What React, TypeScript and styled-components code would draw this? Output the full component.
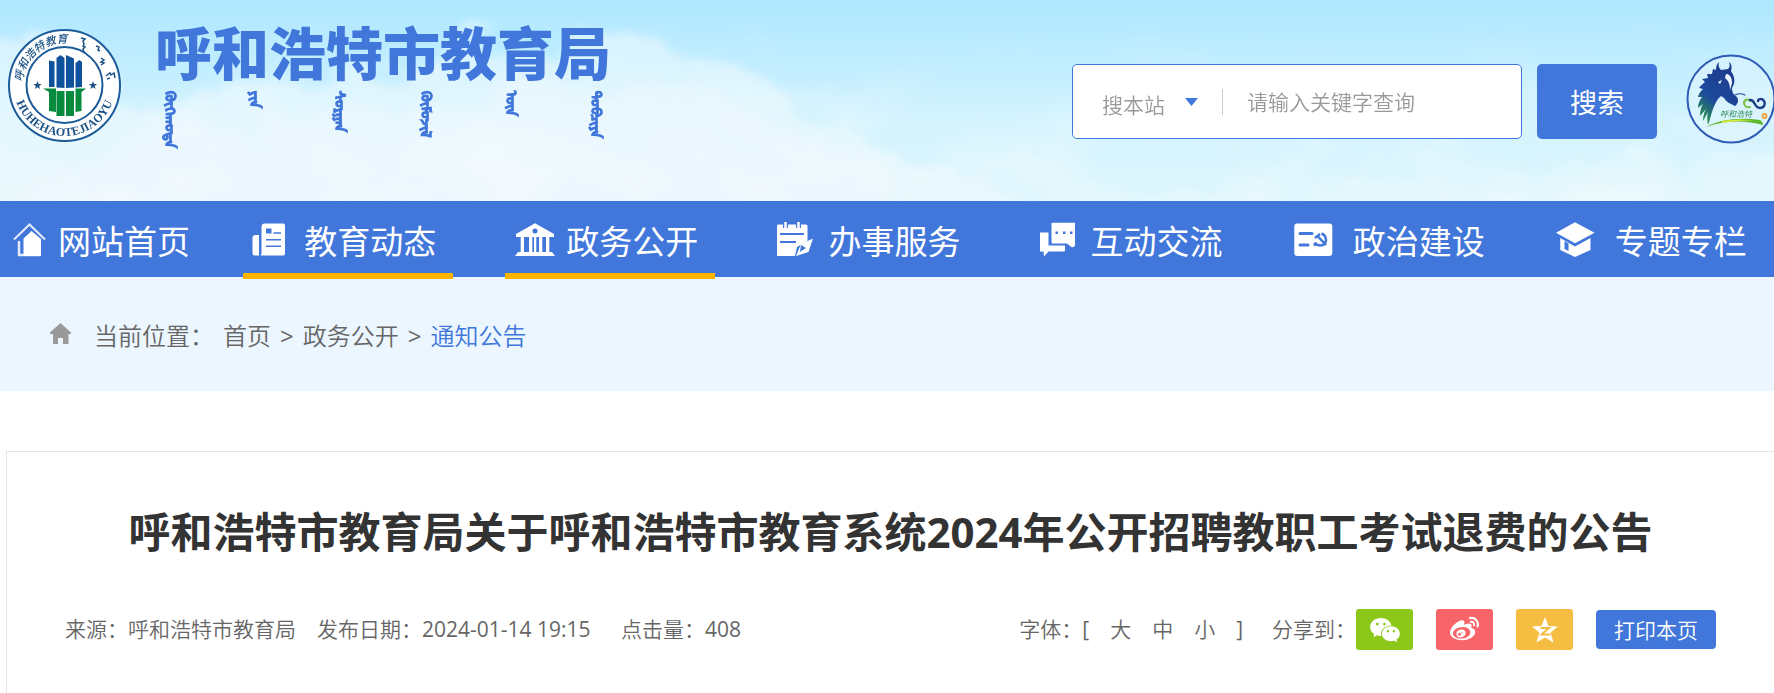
import React from "react";
import styled, { createGlobalStyle } from "styled-components";
import { FaWeibo } from "react-icons/fa";
import { AiFillWechat } from "react-icons/ai";

const blue = "#4177da";
const sans = `"Open Sans", "Noto Sans CJK SC", sans-serif`;

const GlobalStyle = createGlobalStyle`
  *, *::before, *::after { box-sizing: border-box; }
  body {
    margin: 0;
    background: #fff;
    color: #666;
    font-family: ${sans};
    font-weight: 350;
    overflow-x: hidden;
  }
  a { color: inherit; text-decoration: none; }
  button, input, select { font-family: inherit; font-weight: inherit; }
`;

const Latin = styled.span`
  font-weight: 400;
`;

/* ---------- header ---------- */

const Header = styled.header`
  position: relative;
  display: flex;
  align-items: flex-start;
  padding: 28px 0 57px 8px;
  background: linear-gradient(#ade7ff 0, #bfedff 60px, #d3f3fe 120px, #def6fd 201px);
  overflow: hidden;
`;

const Sky = styled.svg`
  position: absolute;
  inset: 0;
  width: 100%;
  height: 100%;
`;

const Brand = styled.a`
  position: relative;
  display: flex;
  gap: 34px;
  color: ${blue};
`;

const Seal = styled.svg`
  width: 113px;
  height: 116px;
`;

const Wordmark = styled.div`
  display: flex;
  flex-direction: column;
  gap: 19px;
`;

const SiteName = styled.span`
  font-family: "Noto Sans CJK SC", sans-serif;
  font-size: 57px;
  font-weight: 900;
  line-height: 44px;
  white-space: nowrap;
`;

const MongolianName = styled.span`
  display: flex;
  justify-content: space-between;
  height: 53px;
`;

const MongolianWord = styled.span`
  writing-mode: vertical-lr;
  font-size: 14px;
  font-weight: 700;
  line-height: 30px;
  white-space: nowrap;
  -webkit-text-stroke: 1px ${blue};
`;

const SearchForm = styled.form`
  position: relative;
  display: flex;
  gap: 15px;
  margin: 36px 29px 0 auto;
`;

const SearchBox = styled.div`
  display: flex;
  align-items: center;
  width: 450px;
  height: 75px;
  padding: 0 24px 0 29px;
  border: 1px solid ${blue};
  border-radius: 5px;
  background: #fff;
`;

const ScopeSelect = styled.select`
  appearance: none;
  width: 83px;
  margin-top: 6px;
  padding: 0;
  border: 0;
  outline: 0;
  background: transparent;
  color: #999;
  font-size: 21px;
  line-height: 32px;
`;

const Caret = styled.svg`
  width: 13px;
  height: 8px;
  pointer-events: none;
`;

const Divider = styled.span`
  width: 1px;
  height: 26px;
  margin: 0 24px;
  background: #ccc;
`;

const Keyword = styled.input`
  flex: 1;
  min-width: 0;
  padding: 0;
  border: 0;
  outline: 0;
  background: transparent;
  color: #333;
  font-size: 21px;
  line-height: 32px;
  &::placeholder { color: #999; opacity: 1; }
`;

const SearchButton = styled.button`
  width: 120px;
  height: 75px;
  padding: 0;
  border: 0;
  border-radius: 5px;
  background: ${blue};
  color: #fff;
  font-size: 27px;
  font-weight: 400;
  cursor: pointer;
`;

const CityBadge = styled.svg`
  position: relative;
  flex: none;
  width: 88px;
  height: 90px;
  margin-top: 26px;
  overflow: visible;
`;

/* ---------- navigation ---------- */

const Nav = styled.nav`
  background: ${blue};
`;

const NavList = styled.ul`
  display: grid;
  grid-template-columns: 191fr repeat(6, 210fr);
  gap: 52px;
  height: 76px;
  margin: 0;
  padding: 0 10px 0 0;
  list-style: none;
`;

const NavItem = styled.li`
  position: relative;
`;

const NavLink = styled.a<{ $active?: boolean }>`
  display: flex;
  align-items: center;
  height: 78px;
  padding-bottom: 2px;
  color: #fff;
  font-size: 33px;
  font-weight: 400;
  line-height: 48px;
  white-space: nowrap;
  box-shadow: ${(p) => (p.$active ? "inset 0 -6px #ffb400" : "none")};
`;

const NavLabel = styled.span`
  padding-top: 5px;
`;

const NavIcon = styled.svg<{ $w: number }>`
  flex: none;
  width: ${(p) => p.$w}px;
  height: 36px;
  fill: #fff;
`;

/* ---------- breadcrumb ---------- */

const Crumbs = styled.nav`
  display: flex;
  align-items: center;
  gap: 9px;
  height: 114px;
  padding: 4px 50px 0;
  background: #ebf6ff;
  font-size: 24px;
  line-height: 36px;
`;

const CrumbHome = styled.svg`
  width: 21px;
  height: 21px;
  margin: 0 14px 6px 0;
  fill: #999;
`;

const CrumbLink = styled.a<{ $current?: boolean }>`
  color: ${(p) => (p.$current ? blue : "#666")};
`;

/* ---------- article ---------- */

const Article = styled.main`
  margin: 60px 0 0 6px;
  border: 1px solid #e5e5e5;
  border-width: 1px 0 0 1px;
  padding: 50px 58px 43px;
`;

const Title = styled.h1`
  margin: 0;
  color: #333;
  font-size: 42px;
  font-weight: 700;
  line-height: 60px;
  text-align: center;
`;

const MetaBar = styled.div`
  display: flex;
  align-items: center;
  justify-content: space-between;
  margin-top: 47px;
  font-size: 21px;
  line-height: 32px;
  white-space: nowrap;
`;

const Facts = styled.div`
  display: flex;
  gap: 21px;
  margin-top: -2px;
`;

const PublishDate = styled.span`
  min-width: 283px;
`;

const Tools = styled.div`
  display: flex;
  align-items: center;
  gap: 23px;
`;

const FontSizes = styled.div`
  display: flex;
  gap: 21px;
  margin: -2px 6px 0 0;
`;

const SizeButton = styled.button`
  padding: 0;
  border: 0;
  background: none;
  color: inherit;
  font-size: 21px;
  line-height: 32px;
  cursor: pointer;
`;

const Share = styled.div`
  display: flex;
  align-items: center;
  gap: 23px;
`;

const ShareLabel = styled.span`
  margin: -2px -23px 0 0;
`;

const ShareButton = styled.button<{ $bg: string }>`
  display: flex;
  align-items: center;
  justify-content: center;
  width: 57px;
  height: 41px;
  padding: 0;
  border: 0;
  border-radius: 3px;
  background: ${(p) => p.$bg};
  color: #fff;
  cursor: pointer;
`;

const PrintButton = styled.button`
  width: 120px;
  height: 39px;
  padding: 0;
  border: 0;
  border-radius: 4px;
  background: ${blue};
  color: #fff;
  font-size: 21px;
  line-height: 32px;
  cursor: pointer;
`;

/* ---------- drawings ---------- */

const Clouds = () => (
  <Sky viewBox="0 0 1774 201" preserveAspectRatio="none" aria-hidden="true">
    <defs>
      <filter id="puff" x="-10%" y="-40%" width="120%" height="180%">
        <feTurbulence type="fractalNoise" baseFrequency="0.018 0.028" numOctaves="5" seed="7" result="n" />
        <feDisplacementMap in="SourceGraphic" in2="n" scale="70" xChannelSelector="R" yChannelSelector="G" />
        <feGaussianBlur stdDeviation="4" />
      </filter>
      <filter id="haze" x="0" y="0" width="100%" height="100%">
        <feTurbulence type="fractalNoise" baseFrequency="0.009 0.016" numOctaves="5" seed="12" />
        <feColorMatrix values="0 0 0 0 0.970  0 0 0 0 0.990  0 0 0 0 1  2.600 0 0 0 -1.050" />
      </filter>
      <linearGradient id="fade" x1="0" y1="0" x2="0" y2="1">
        <stop offset=".05" stopColor="#000" />
        <stop offset="1" stopColor="#fff" />
      </linearGradient>
      <mask id="low">
        <rect width="1774" height="201" fill="url(#fade)" />
      </mask>
    </defs>
    <g filter="url(#puff)" fill="#f4fbfe">
      <path opacity=".5" d="M-40 40 L40 35 110 60 135 110 200 105 300 75 400 70 480 40 560 55 620 30 690 50 740 65 770 90 850 120 880 150 960 160 1020 200 1020 260 -40 260Z" />
      <path opacity=".4" d="M-40 200 L60 170 180 120 420 110 640 80 700 85 740 110 830 160 900 180 960 260 -40 260Z" />
      <path opacity=".3" d="M960 240 L1060 210 1180 200 1300 195 1420 175 1500 180 1600 155 1700 170 1830 140 1830 260 960 260Z" />
    </g>
    <g mask="url(#low)">
      <rect width="1774" height="201" filter="url(#haze)" opacity=".4" />
    </g>
  </Sky>
);

const SealMark = () => (
  <Seal viewBox="8 28 113 116" aria-hidden="true">
    <defs>
      <path id="sealTop" d="M22.500 85 A42 42 0 0 1 106.500 85" />
      <path id="sealBottom" d="M13.500 85 A51 51 0 0 0 115.500 85" />
    </defs>
    <circle cx="64.500" cy="85.500" r="55.500" fill="#fff" stroke="#1d5c9b" strokeWidth="2" />
    <circle cx="64.500" cy="85" r="38" fill="#fff" stroke="#1d5c9b" strokeWidth="2" />
    <g fill="#1d5286">
      <text fontFamily="'Noto Sans CJK SC', sans-serif" fontStyle="italic" fontWeight="500" fontSize="11">
        <textPath href="#sealTop" startOffset="3">呼和浩特教育</textPath>
      </text>
      <text fontFamily="'Liberation Serif', serif" fontWeight="700" fontSize="12">
        <textPath href="#sealBottom" startOffset="50%" textAnchor="middle">HUHEHAOTEJIAOYU</textPath>
      </text>
      <path d="M37.500 81l1.100 3 3.100.1-2.500 1.900.9 3-2.600-1.800-2.600 1.800.9-3-2.500-1.900 3.100-.1zM93 81l1.100 3 3.100.1-2.500 1.900.9 3-2.600-1.800-2.600 1.800.9-3-2.500-1.900 3.100-.1z" />
    </g>
    <g stroke="#1d5286" fill="none" strokeWidth="1.500">
      <path d="M81 38l4 1-2 2 1 3-1 2 2 1-2 2 1 3M96 46l3 1-1 3 2 1M101 58l3 2-3 2 3 1-3 2M106 76l4-3 1 2 3-2 1 5M107 79l3-1" />
    </g>
    <path fill="#0d529b" d="M49 60.500l5.500 1V87H49zM56.500 58l4-3 4 3v30l-8-.5zM66 55l8 3.500v29l-8 .5zM75.500 63l4-3 2.500 2V87l-6.500.5z" />
    <path fill="#068a3d" d="M43 88.500h13V112l-7-1V92zM56.500 91h8v25h-8zM66 91h8v25h-8zM75.500 88.500H86L81.500 92v19l-6 1z" />
  </Seal>
);

const HorseBadge = () => (
  <CityBadge viewBox="0 0 88 90" aria-label="呼和浩特">
    <defs>
      <linearGradient id="coat" x1="0.700" y1="0" x2="0.200" y2="1">
        <stop offset="0" stopColor="#1e3a8c" />
        <stop offset=".6" stopColor="#1c4a9c" />
        <stop offset="1" stopColor="#2c9a45" />
      </linearGradient>
    </defs>
    <circle cx="45" cy="45" r="43.500" fill="#e4f6fe" fillOpacity=".5" stroke="#2e5bb5" strokeWidth="2" />
    <path
      fill="url(#coat)"
      d="M33 8c-1 4 0 6 2 8l7-1c2-2 2-4 1-7 3 2 3 6 2 9 3 4 4 9 3 13l-2 4c0 4 1 6 5 9 2 3 1 7-2 9l-4-2c-3-1-5-3-7-6l-3-2c-4 3-6 8-8 13-2 5-3 11-5 16-1-5-1-9 0-13l-5 9c0-5 1-8 3-12l-6 7c0-5 1-9 3-12l-5 4c0-5 2-8 4-11l-4 0c1-4 3-6 5-8l-4-1c2-3 4-4 6-6l-3-3c3 0 4-1 6-1l-1-4 5 0 1-5 3 1c0-4 1-6 3-8z"
    />
    <path fill="#eef9ff" d="M40 20c4 0 6 4 6 9l-2 7c0-5-1-9-5-12zM32 28l4-2-2 4z" />
    <g fill="none" strokeLinecap="round">
      <path stroke="#1c4a9c" strokeWidth="1.200" d="M49 41c4-2 8-1 10 0" />
      <path stroke="#7cbf3c" strokeWidth="2" d="M64 53c-3 1-6-1-6-4s4-5 6-2" />
      <path stroke="#1d3f87" strokeWidth="2.500" d="M64 46c5-1 4 8 10 8 4 0 6-4 4-7-2-3-6-2-6 0" />
      <path stroke="#f0a33a" strokeWidth="2" d="M78 60a2 2 0 1 0 1 0" />
    </g>
    <path fill="#5fb82c" d="M20 73c14-8 34-10 54-7 2 1 3 3 3 5-18-5-37-5-57 2z" />
    <path fill="#dce83c" d="M36 67c12-2 24-2 36 0-12-1-24 0-36 2z" />
    <text x="34" y="63" fill="#2b8a55" fontSize="8" fontStyle="italic" fontWeight="400" fontFamily="'Noto Sans CJK SC', sans-serif">
      呼和浩特
    </text>
  </CityBadge>
);

const line = { stroke: blue, strokeWidth: 2, fill: "none" };

const icons = {
  home: (
    <>
      <path d="M14 18.500L29.500 3.500 45 18.500" fill="none" stroke="#e4ecfb" strokeWidth="2" />
      <path d="M19 20v14h21" fill="none" stroke="#e4ecfb" strokeWidth="2.500" />
      <path d="M23.500 17.500l8-7.500 9.500 8v17H23.500z" />
    </>
  ),
  news: (
    <>
      <path d="M21 2.500h19a2 2 0 0 1 2 2v28a2 2 0 0 1-2 2H17.500a3 3 0 0 0 1-2v-27a3 3 0 0 1 2.500-3z" />
      <path d="M9.500 17a3 3 0 0 1 3-3H16v20.500h-4a2.500 2.500 0 0 1-2.500-2.500z" />
      <path fill={blue} d="M23 7.500h5.500v5H23z" />
      <path {...line} strokeWidth={1.500} d="M30.500 12H38M23 18.700h15M23 25.300h15" />
    </>
  ),
  bank: (
    <>
      <path d="M30 2.300L49 13v3H11v-3zM15.700 16H19v15h-3.300zM24 16h3.300v15H24zM29 16h2.300v15H29zM34 16h3.300v15H34zM41 16h3.300v15H41zM13 31h34l3 4H10z" />
      <circle cx="30" cy="10" r="2.500" fill={blue} />
    </>
  ),
  note: (
    <>
      <path d="M12 3.500h27a1.500 1.500 0 0 1 1.500 1.500v15L30 26l-2 9H10V5a1.500 1.500 0 0 1 2-1.500z" />
      <path {...line} strokeWidth={5} d="M18.500 0v7M31.500 0v7" />
      <path stroke="#fff" strokeWidth={2.500} d="M18.500 1v6M31.500 1v6" />
      <path {...line} d="M13 13h24M13 21h16" />
      <path d="M46 17.500l-12 5.500-5 12 12.500-4z" />
      <path fill={blue} d="M34 24l5 3-6 4z" />
    </>
  ),
  chat: (
    <>
      <path d="M22.500 1.700H45V25l-3 1.500-5-4H22.500a1 1 0 0 1-1-1V2.700a1 1 0 0 1 1-1z" />
      <path d="M10 11.500h8.500v13H35v5a1 1 0 0 1-1 1H18.500L14 35.500l-.5-5H10z" />
      <path fill={blue} d="M25.500 10.500H28V13h-2.500zM33 10.500h2.500V13H33zM40 10.500h2.500V13H40z" />
    </>
  ),
  party: (
    <>
      <rect x="2.300" y="2.500" width="38" height="32.500" rx="3" />
      <path {...line} strokeWidth={3} strokeLinecap="round" d="M8 12.500h12M8 24h8" />
      <path {...line} strokeWidth={2.500} d="M29.500 12.500c5 2 6.500 9 1 11.500-3 1-6 0-8.500-2M23 17l5-4M25.500 15l8.500 9M22 24.500l3-2.500" />
    </>
  ),
  cap: (
    <>
      <path d="M21 1.300l19.500 10.500L21 22.300 2 11.800z" />
      <path d="M6.300 17L21 25.500 36.500 17v12L21 36 6.300 29z" />
      <path fill={blue} d="M10.500 20l4 2.500v7.500l-4-2z" />
    </>
  ),
};

const navItems: { label: string; icon: keyof typeof icons; active?: boolean }[] = [
  { label: "网站首页", icon: "home" },
  { label: "教育动态", icon: "news", active: true },
  { label: "政务公开", icon: "bank", active: true },
  { label: "办事服务", icon: "note" },
  { label: "互动交流", icon: "chat" },
  { label: "政治建设", icon: "party" },
  { label: "专题专栏", icon: "cap" },
];

const mongolian = ["ᠬᠥᠬᠡᠬᠣᠲᠠ", "ᠶᠢᠨ", "ᠰᠤᠷᠭᠠᠨ", "ᠬᠥᠮᠦᠵᠢᠯ", "ᠦᠨ", "ᠲᠣᠪᠴᠢᠶᠠ"];

export default function App() {
  return (
    <>
      <GlobalStyle />
      <Header>
        <Clouds />
        <Brand href="#">
          <SealMark />
          <Wordmark>
            <SiteName>呼和浩特市教育局</SiteName>
            <MongolianName lang="mn-Mong">
              {mongolian.map((w) => (
                <MongolianWord key={w}>{w}</MongolianWord>
              ))}
            </MongolianName>
          </Wordmark>
        </Brand>
        <SearchForm onSubmit={(e) => e.preventDefault()}>
          <SearchBox>
            <ScopeSelect aria-label="搜索范围">
              <option>搜本站</option>
            </ScopeSelect>
            <Caret viewBox="0 0 13 8" aria-hidden="true">
              <path d="M0 0h13L6.500 8z" fill={blue} />
            </Caret>
            <Divider />
            <Keyword type="text" aria-label="关键字" placeholder="请输入关键字查询" />
          </SearchBox>
          <SearchButton type="submit">搜索</SearchButton>
        </SearchForm>
        <HorseBadge />
      </Header>

      <Nav>
        <NavList>
          {navItems.map((n, i) => (
            <NavItem key={n.label}>
              <NavLink href="#" $active={n.active}>
                <NavIcon $w={i === 0 ? 58 : 61} viewBox={`0 0 ${i === 0 ? 58 : 61} 36`} aria-hidden="true">
                  {icons[n.icon]}
                </NavIcon>
                <NavLabel>{n.label}</NavLabel>
              </NavLink>
            </NavItem>
          ))}
        </NavList>
      </Nav>

      <Crumbs>
        <CrumbHome viewBox="0 0 21 21" aria-hidden="true">
          <path d="M10.500 0L21 9.500V11h-2.500v9a1 1 0 0 1-1 1H13v-6H8v6H4a1 1 0 0 1-1-1v-9H0V9.500z" />
        </CrumbHome>
        <span>当前位置：</span>
        <CrumbLink href="#">首页</CrumbLink>
        <Latin>&gt;</Latin>
        <CrumbLink href="#">政务公开</CrumbLink>
        <Latin>&gt;</Latin>
        <CrumbLink href="#" $current>
          通知公告
        </CrumbLink>
      </Crumbs>

      <Article>
        <Title>呼和浩特市教育局关于呼和浩特市教育系统2024年公开招聘教职工考试退费的公告</Title>
        <MetaBar>
          <Facts>
            <span>来源：呼和浩特市教育局</span>
            <PublishDate>
              发布日期：<Latin>2024-01-14 19:15</Latin>
            </PublishDate>
            <span>
              点击量：<Latin>408</Latin>
            </span>
          </Facts>
          <Tools>
            <FontSizes>
              <span>
                字体：<Latin>[</Latin>
              </span>
              <SizeButton type="button">大</SizeButton>
              <SizeButton type="button">中</SizeButton>
              <SizeButton type="button">小</SizeButton>
              <Latin>]</Latin>
            </FontSizes>
            <Share>
              <ShareLabel>分享到：</ShareLabel>
              <ShareButton type="button" aria-label="微信" $bg="#8cc81a">
                <AiFillWechat size={34} />
              </ShareButton>
              <ShareButton type="button" aria-label="微博" $bg="#f76469">
                <FaWeibo size={29} />
              </ShareButton>
              <ShareButton type="button" aria-label="QQ空间" $bg="#f5bd42">
                <svg width="26" height="26" viewBox="0 0 26 26" aria-hidden="true">
                  <path fill="#fff" d="M13 0l3.500 9 9.500.5-7.300 6 2.800 10L13 20.500 4.500 25.500l2.800-10L0 9.500 9.500 9z" />
                  <path fill="none" stroke="#f5bd42" strokeWidth="2" d="M8.500 11h8.500l-7.500 6.500h9" />
                </svg>
              </ShareButton>
            </Share>
            <PrintButton type="button">打印本页</PrintButton>
          </Tools>
        </MetaBar>
      </Article>
    </>
  );
}
